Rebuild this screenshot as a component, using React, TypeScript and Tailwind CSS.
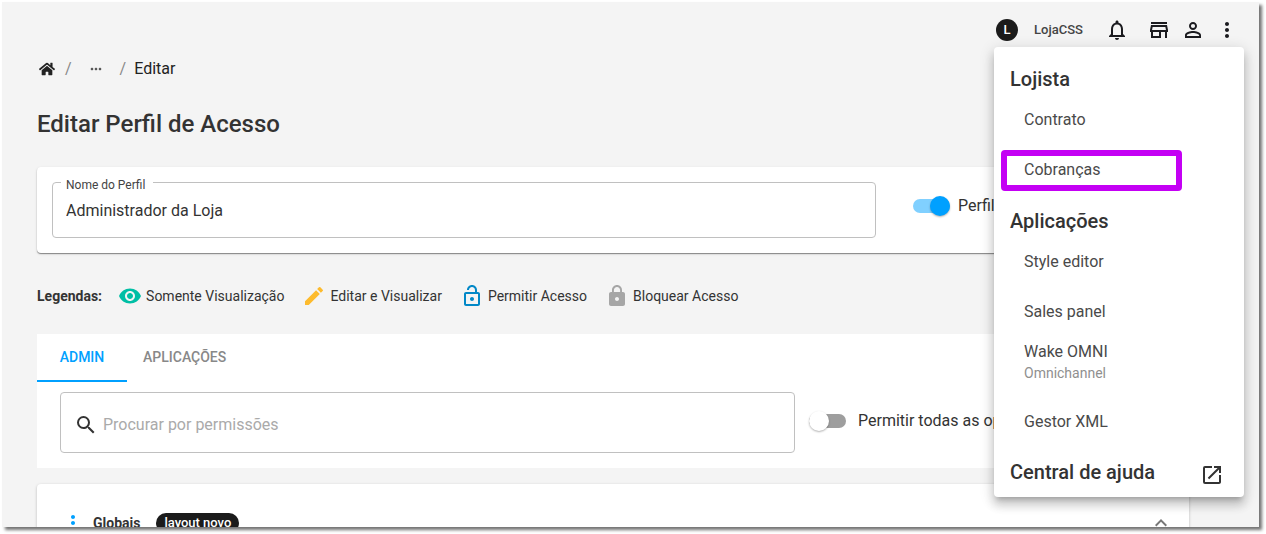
import { FaHome } from 'react-icons/fa'
import {
  MdEdit,
  MdExpandLess,
  MdLock,
  MdMoreHoriz,
  MdMoreVert,
  MdNotificationsNone,
  MdOpenInNew,
  MdOutlineLockOpen,
  MdOutlineStore,
  MdPersonOutline,
  MdSearch,
  MdVisibility,
} from 'react-icons/md'

type SwitchProps = {
  id: string
  label: string
  defaultChecked?: boolean
  className?: string
}

function Switch({ id, label, defaultChecked = false, className = 'gap-2' }: SwitchProps) {
  return (
    <div className={`flex items-center ${className}`}>
      <span className="relative flex h-5 w-[37px] shrink-0 items-center">
        <input
          id={id}
          type="checkbox"
          role="switch"
          defaultChecked={defaultChecked}
          className="peer h-3.5 w-full cursor-pointer appearance-none rounded-full bg-[#9e9e9e] checked:bg-[#80d0ff]"
        />
        <span className="pointer-events-none absolute left-0 h-5 w-5 rounded-full bg-white shadow-[0_1px_2px_rgba(0,0,0,0.3)] peer-checked:left-auto peer-checked:right-0 peer-checked:bg-[#00a0ff]" />
      </span>
      <label htmlFor={id} className="whitespace-nowrap text-base text-[#333]">
        {label}
      </label>
    </div>
  )
}

function Header() {
  return (
    <header className="flex h-14 items-center justify-end pr-5 text-[#1b1b1f]">
      <span className="flex h-[22px] w-[22px] items-center justify-center rounded-full bg-[#1b1b1b] text-[13px] font-medium text-white">
        L
      </span>
      <span className="ml-4 text-[13px] font-medium text-[#444]">LojaCSS</span>
      <button aria-label="Notificações" className="ml-[22px]">
        <MdNotificationsNone className="h-6 w-6" />
      </button>
      <button aria-label="Loja" className="ml-[18px]">
        <MdOutlineStore className="h-6 w-6" />
      </button>
      <button aria-label="Perfil" className="ml-2.5">
        <MdPersonOutline className="h-6 w-6" />
      </button>
      <button aria-label="Mais opções" aria-expanded="true" className="ml-2.5">
        <MdMoreVert className="h-6 w-6" />
      </button>
    </header>
  )
}

function MenuItem({ label, note, highlighted = false }: { label: string; note?: string; highlighted?: boolean }) {
  return (
    <li className="relative">
      {highlighted && (
        <span className="pointer-events-none absolute bottom-[3px] left-[7px] top-1.5 w-[181px] rounded border-6 border-[#c400f4]" />
      )}
      <a href="#" className={`block pl-[30px] text-base text-[#4a4a4a] ${note ? 'h-[60px] pt-1' : 'h-[50px] pt-3.5'}`}>
        <span className="block leading-6">{label}</span>
        {note && <span className="block text-sm leading-[18px] text-[#8f8f8f]">{note}</span>}
      </a>
    </li>
  )
}

function OptionsMenu() {
  return (
    <nav className="absolute right-[15px] top-[45px] w-[250px] rounded bg-white pb-[10px] pt-[17px] shadow-[0_5px_5px_-3px_rgba(0,0,0,0.2),0_8px_10px_1px_rgba(0,0,0,0.14),0_3px_14px_2px_rgba(0,0,0,0.12)]">
      <h2 className="pl-4 text-xl leading-[30px] font-medium text-[#333]">Lojista</h2>
      <ul>
        <MenuItem label="Contrato" />
        <MenuItem label="Cobranças" highlighted />
      </ul>
      <h2 className="mt-3 pl-4 text-xl leading-[30px] font-medium text-[#333]">Aplicações</h2>
      <ul>
        <MenuItem label="Style editor" />
        <MenuItem label="Sales panel" />
        <MenuItem label="Wake OMNI" note="Omnichannel" />
        <MenuItem label="Gestor XML" />
      </ul>
      <a href="#" className="mt-[11px] flex items-end justify-between pl-4 pr-5 text-xl leading-[30px] font-medium text-[#333]">
        Central de ajuda
        <MdOpenInNew className="h-6 w-6" />
      </a>
    </nav>
  )
}

const legends = [
  { label: 'Somente Visualização', icon: <MdVisibility className="h-6 w-6 text-[#00bfa5]" /> },
  { label: 'Editar e Visualizar', icon: <MdEdit className="h-6 w-6 text-[#fdbb2d]" /> },
  { label: 'Permitir Acesso', icon: <MdOutlineLockOpen className="h-6 w-6 text-[#0288c7]" /> },
  { label: 'Bloquear Acesso', icon: <MdLock className="h-6 w-6 text-[#a6a6a6]" /> },
]

export default function App() {
  return (
    <div className="h-screen overflow-hidden bg-white pb-[7px] pl-0.5 pr-[7px] pt-0.5 font-[Roboto,sans-serif]">
      <div className="relative h-full shadow-[3px_3px_3px_rgba(0,0,0,0.55)]">
        <div className="h-full overflow-hidden bg-[#f4f4f4]">
          <Header />

          <main className="pl-[35px] pr-[70px]">
            {/* Breadcrumb */}
            <nav aria-label="Breadcrumb" className="flex h-[22px] items-center text-base text-[#222]">
              <a href="#" aria-label="Início" className="ml-0.5">
                <FaHome className="h-4 w-4" />
              </a>
              <span className="ml-2.5 text-[#888]">/</span>
              <button aria-label="Mostrar caminho" className="ml-4">
                <MdMoreHoriz className="h-4 w-4 text-[#555]" />
              </button>
              <span className="ml-4 text-[#888]">/</span>
              <span className="ml-2">Editar</span>
            </nav>

            <h1 className="mt-7 text-2xl font-medium text-[#333]">Editar Perfil de Acesso</h1>

            {/* Profile name */}
            <section className="mt-[27px] flex h-[86px] items-center rounded bg-white pl-[15px] shadow-[0_1px_1px_rgba(0,0,0,0.4),0_1px_3px_rgba(0,0,0,0.12)]">
              <div className="relative h-14 flex-1">
                <input
                  id="profile-name"
                  type="text"
                  defaultValue="Administrador da Loja"
                  className="h-full w-full rounded border border-[#c0c0c0] px-[13px] text-base text-[#333] outline-none"
                />
                <label htmlFor="profile-name" className="absolute -top-[5px] left-[9px] bg-white pl-[5px] pr-2 text-xs leading-4 text-[#444]">
                  Nome do Perfil
                </label>
              </div>
              <div className="ml-[37px] w-[276px] pb-2">
                <Switch id="profile-active" label="Perfil Ativo" defaultChecked />
              </div>
            </section>

            {/* Legends */}
            <section className="mt-[31px] flex h-6 items-center whitespace-nowrap text-sm text-[#333]">
              <span className="mr-4 font-bold">Legendas:</span>
              <ul className="flex items-center gap-[18px]">
                {legends.map((legend) => (
                  <li key={legend.label} className="flex items-center gap-1">
                    {legend.icon}
                    {legend.label}
                  </li>
                ))}
              </ul>
            </section>

            {/* Permissions */}
            <section className="mt-[26px] bg-white pb-[15px]">
              <div role="tablist" className="flex h-12 text-sm font-medium">
                <button role="tab" aria-selected="true" className="w-[90px] border-b-2 border-[#00a0ff] text-[#00a0ff]">
                  ADMIN
                </button>
                <button role="tab" aria-selected="false" className="border-b-2 border-transparent px-4 text-[#888]">
                  APLICAÇÕES
                </button>
              </div>
              <div className="mt-2.5 flex items-center pl-[23px]">
                <div className="flex h-[61px] flex-1 items-center rounded border border-[#c0c0c0] px-[13px] pt-1">
                  <MdSearch className="h-6 w-6 text-[#333]" />
                  <input
                    type="search"
                    aria-label="Procurar por permissões"
                    placeholder="Procurar por permissões"
                    className="ml-[5px] flex-1 text-base outline-none placeholder:text-[#aaa]"
                  />
                </div>
                <div className="ml-3.5 w-[380px] pb-1">
                  <Switch id="allow-all" label="Permitir todas as opções" className="gap-3" />
                </div>
              </div>
            </section>

            <section className="mt-4 flex h-[78px] items-center rounded bg-white pl-6 pr-4 shadow-[0_1px_3px_rgba(0,0,0,0.25)]">
              <button aria-label="Opções do grupo">
                <MdMoreVert className="h-6 w-6 text-[#00a0ff]" />
              </button>
              <span className="ml-2 text-sm font-bold text-[#333]">Globais</span>
              <span className="ml-4 rounded-full bg-[#1b1b1b] px-2 text-[13px] leading-5 font-medium text-white">layout novo</span>
              <button aria-label="Recolher" className="ml-auto">
                <MdExpandLess className="h-6 w-6 text-[#777]" />
              </button>
            </section>
          </main>
        </div>

        <OptionsMenu />
      </div>
    </div>
  )
}
